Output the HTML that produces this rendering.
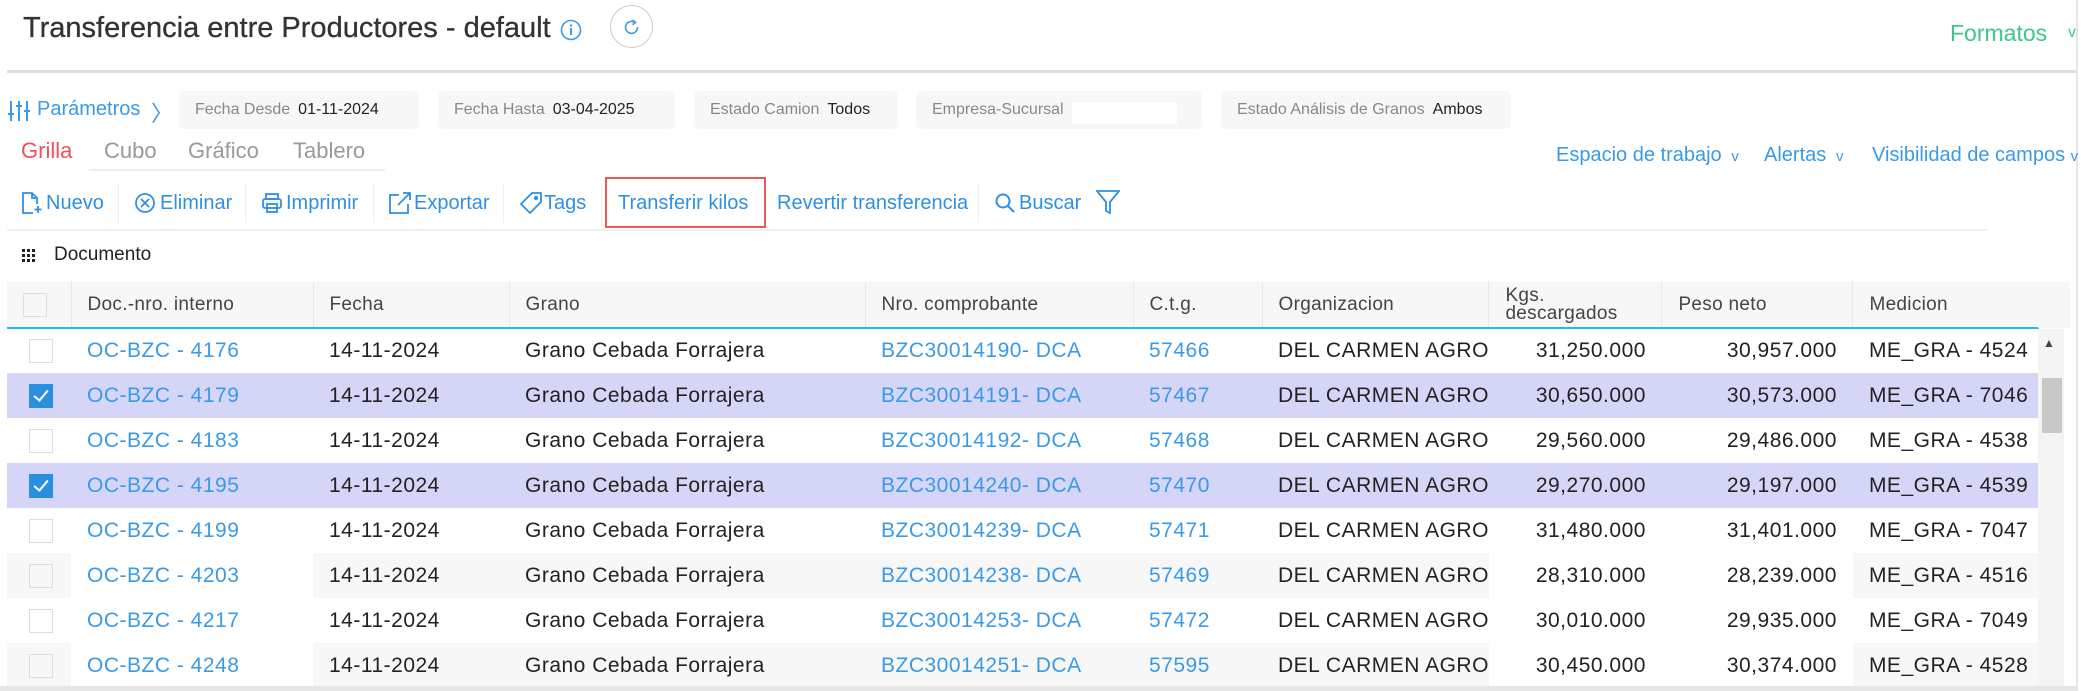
<!DOCTYPE html>
<html><head><meta charset="utf-8"><style>
*{margin:0;padding:0;box-sizing:border-box}
body{width:2081px;height:691px;overflow:hidden;background:#fff;font-family:"Liberation Sans",sans-serif;position:relative;color:#333}
.a{position:absolute;white-space:nowrap}
.blue{color:#3a9ae6}
.pbox{position:absolute;top:91px;height:38px;background:#f7f7f7;border-radius:6px;font-size:16px;line-height:38px;padding-left:16px}
.pbox .l{color:#888;margin-right:8px}
.pbox .v{color:#222}
.tb{position:absolute;top:191px;font-size:20px;color:#2f8fe3;line-height:24px}
.div{position:absolute;top:183px;width:1px;height:40px;background:#eee}
table{position:absolute;left:7px;top:282px;border-collapse:collapse;table-layout:fixed;font-size:21px;letter-spacing:0.5px}
td,th{overflow:hidden;white-space:nowrap;padding:0}
th{height:46px;background:#f7f7f7;font-weight:normal;color:#444;font-size:19px;letter-spacing:0.3px;text-align:left;border-bottom:2px solid #1ebcf2;border-right:1px solid #e8e8e8;padding-left:16px}
td{height:45px;padding-left:16px;color:#222}
td.r{text-align:right;padding-right:16px;padding-left:0}
td.l{color:#3a9ae6}
tr.s td{background:#d5d5f7}
.g{background:#f7f7f7}
.cb{display:inline-block;width:24px;height:24px;border:1px solid #ddd;background:#fff;vertical-align:middle}
.cb.c{background:#2b8fe0;border-color:#2b8fe0;position:relative}
.cb.c:after{content:"";position:absolute;left:7px;top:2px;width:6px;height:12px;border:solid #fff;border-width:0 2.5px 2.5px 0;transform:rotate(40deg)}
td.k{padding-left:22px}
</style></head><body>
<div class="a" style="left:23px;top:12px;font-size:29px;color:#333;-webkit-text-stroke:0.3px #333">Transferencia entre Productores - default</div>
<svg class="a" style="left:560px;top:19px" width="22" height="22" viewBox="0 0 22 22"><circle cx="11" cy="11" r="9.5" fill="none" stroke="#3a9ae6" stroke-width="1.6"/><circle cx="11" cy="6.5" r="1.2" fill="#3a9ae6"/><rect x="10" y="9" width="2" height="7" fill="#3a9ae6"/></svg>
<div class="a" style="left:610px;top:5px;width:43px;height:43px;border:1.5px solid #ccc;border-radius:50%"></div>
<svg class="a" style="left:622px;top:17px" width="20" height="20" viewBox="0 0 20 20"><path d="M13 5.5A6 6 0 1 0 15.5 10" fill="none" stroke="#3a9ae6" stroke-width="1.6"/><path d="M10.5 3l3 2.5-3 2.2" fill="none" stroke="#3a9ae6" stroke-width="1.6"/></svg>
<div class="a" style="left:1950px;top:20px;font-size:23px;color:#3cc68a">Formatos</div>
<div class="a" style="left:2068px;top:24px;font-size:16px;color:#3cc68a">v</div>
<div class="a" style="left:7px;top:70px;width:2070px;height:3px;background:#ddd"></div>
<div class="a" style="left:2076px;top:0;width:2px;height:691px;background:#e5e5e5"></div>

<svg class="a" style="left:7px;top:99px" width="24" height="24" viewBox="0 0 24 24" stroke="#3a9ae6" stroke-width="2" fill="none"><path d="M4 2v20M12 2v20M20 2v20"/><path d="M1 15h6M9 7h6M17 12h6"/></svg>
<div class="a blue" style="left:37px;top:98px;font-size:20px">Parámetros</div>
<div class="a blue" style="left:151px;top:96px;font-size:22px">〉</div>
<div class="pbox" style="left:179px;width:240px"><span class="l">Fecha Desde</span><span class="v">01-11-2024</span></div>
<div class="pbox" style="left:438px;width:237px"><span class="l">Fecha Hasta</span><span class="v">03-04-2025</span></div>
<div class="pbox" style="left:694px;width:204px"><span class="l">Estado Camion</span><span class="v">Todos</span></div>
<div class="pbox" style="left:916px;width:286px"><span class="l">Empresa-Sucursal</span></div>
<div class="a" style="left:1072px;top:102px;width:105px;height:22px;background:#fff"></div>
<div class="pbox" style="left:1221px;width:290px"><span class="l">Estado Análisis de Granos</span><span class="v">Ambos</span></div>

<div class="a" style="left:21px;top:138px;font-size:22px;color:#f0505a">Grilla</div>
<div class="a" style="left:104px;top:138px;font-size:22px;color:#999">Cubo</div>
<div class="a" style="left:188px;top:138px;font-size:22px;color:#999">Gráfico</div>
<div class="a" style="left:293px;top:138px;font-size:22px;color:#999">Tablero</div>
<div class="a" style="left:89px;top:169px;width:296px;height:2px;background:#eee"></div>
<div class="a blue" style="left:1556px;top:144px;font-size:20px">Espacio de trabajo <span style="font-size:15px">&nbsp;v</span></div>
<div class="a blue" style="left:1764px;top:144px;font-size:20px">Alertas <span style="font-size:15px">&nbsp;v</span></div>
<div class="a blue" style="left:1872px;top:144px;font-size:20px">Visibilidad de campos <span style="font-size:15px">v</span></div>

<svg class="a" style="left:21px;top:191px" width="22" height="24" viewBox="0 0 22 24" fill="none" stroke="#2f8fe3" stroke-width="1.8"><path d="M12 22H2V2h9l5 5v6"/><path d="M11 2v5h5"/><path d="M17 15v7M13.5 18.5h7"/></svg>
<div class="tb" style="left:46px">Nuevo</div>
<div class="div" style="left:118px"></div>
<svg class="a" style="left:134px;top:192px" width="22" height="22" viewBox="0 0 22 22" fill="none" stroke="#2f8fe3" stroke-width="1.8"><circle cx="11" cy="11" r="9"/><path d="M7 7l8 8M15 7l-8 8"/></svg>
<div class="tb" style="left:160px">Eliminar</div>
<div class="div" style="left:245px"></div>
<svg class="a" style="left:261px;top:192px" width="22" height="22" viewBox="0 0 22 22" fill="none" stroke="#2f8fe3" stroke-width="1.8"><rect x="5" y="2" width="12" height="5"/><rect x="2" y="7" width="18" height="9" rx="2"/><rect x="6" y="12" width="10" height="8"/></svg>
<div class="tb" style="left:286px">Imprimir</div>
<div class="div" style="left:373px"></div>
<svg class="a" style="left:388px;top:191px" width="24" height="24" viewBox="0 0 24 24" fill="none" stroke="#2f8fe3" stroke-width="1.8"><path d="M11 4H2v18h18v-9"/><path d="M10 14L22 2M15 2h7v7"/></svg>
<div class="tb" style="left:414px">Exportar</div>
<div class="div" style="left:503px"></div>
<svg class="a" style="left:519px;top:191px" width="24" height="24" viewBox="0 0 24 24" fill="none" stroke="#2f8fe3" stroke-width="1.8"><path d="M13 2h9v9L11 22 2 13z"/><circle cx="17" cy="7" r="1.3"/></svg>
<div class="tb" style="left:544px">Tags</div>
<div class="div" style="left:601px"></div>
<div class="a" style="left:605px;top:177px;width:161px;height:51px;border:2px solid #e85a5a"></div>
<div class="tb" style="left:618px">Transferir kilos</div>
<div class="tb" style="left:777px">Revertir transferencia</div>
<div class="div" style="left:978px"></div>
<svg class="a" style="left:994px;top:192px" width="22" height="22" viewBox="0 0 22 22" fill="none" stroke="#2f8fe3" stroke-width="2"><circle cx="9" cy="9" r="6.5"/><path d="M14 14l6 6"/></svg>
<div class="tb" style="left:1019px">Buscar</div>
<svg class="a" style="left:1096px;top:189px" width="24" height="26" viewBox="0 0 24 26" fill="none" stroke="#2f8fe3" stroke-width="1.8"><path d="M1 2h22l-9 11v11l-4-2v-9z"/></svg>
<div class="a" style="left:7px;top:229px;width:1981px;height:2px;background:#f0f0f0"></div>

<svg class="a" style="left:22px;top:249px" width="13" height="13" viewBox="0 0 13 13" fill="#222"><rect x="0" y="0" width="3" height="3"/><rect x="5" y="0" width="3" height="3"/><rect x="10" y="0" width="3" height="3"/><rect x="0" y="5" width="3" height="3"/><rect x="5" y="5" width="3" height="3"/><rect x="10" y="5" width="3" height="3"/><rect x="0" y="10" width="3" height="3"/><rect x="5" y="10" width="3" height="3"/><rect x="10" y="10" width="3" height="3"/></svg>
<div class="a" style="left:54px;top:244px;font-size:19px;color:#222">Documento</div>

<table>
<colgroup><col style="width:64px"><col style="width:242px"><col style="width:196px"><col style="width:356px"><col style="width:268px"><col style="width:129px"><col style="width:226px"><col style="width:173px"><col style="width:191px"><col style="width:186px"></colgroup>
<tr><th style="padding-left:16px"><span class="cb" style="background:#f7f7f7"></span></th><th>Doc.-nro. interno</th><th>Fecha</th><th>Grano</th><th>Nro. comprobante</th><th>C.t.g.</th><th>Organizacion</th><th style="line-height:18px">Kgs.<br>descargados</th><th>Peso neto</th><th>Medicion</th></tr>
<tr><td class="k"><span class="cb"></span></td><td class="l">OC-BZC - 4176</td><td>14-11-2024</td><td>Grano Cebada Forrajera</td><td class="l">BZC30014190- DCA</td><td class="l">57466</td><td>DEL CARMEN AGRO</td><td class="r">31,250.000</td><td class="r">30,957.000</td><td>ME_GRA - 4524</td></tr>
<tr class="s"><td class="k"><span class="cb c"></span></td><td class="l">OC-BZC - 4179</td><td>14-11-2024</td><td>Grano Cebada Forrajera</td><td class="l">BZC30014191- DCA</td><td class="l">57467</td><td>DEL CARMEN AGRO</td><td class="r">30,650.000</td><td class="r">30,573.000</td><td>ME_GRA - 7046</td></tr>
<tr><td class="k"><span class="cb"></span></td><td class="l">OC-BZC - 4183</td><td>14-11-2024</td><td>Grano Cebada Forrajera</td><td class="l">BZC30014192- DCA</td><td class="l">57468</td><td>DEL CARMEN AGRO</td><td class="r">29,560.000</td><td class="r">29,486.000</td><td>ME_GRA - 4538</td></tr>
<tr class="s"><td class="k"><span class="cb c"></span></td><td class="l">OC-BZC - 4195</td><td>14-11-2024</td><td>Grano Cebada Forrajera</td><td class="l">BZC30014240- DCA</td><td class="l">57470</td><td>DEL CARMEN AGRO</td><td class="r">29,270.000</td><td class="r">29,197.000</td><td>ME_GRA - 4539</td></tr>
<tr><td class="k"><span class="cb"></span></td><td class="l">OC-BZC - 4199</td><td>14-11-2024</td><td>Grano Cebada Forrajera</td><td class="l">BZC30014239- DCA</td><td class="l">57471</td><td>DEL CARMEN AGRO</td><td class="r">31,480.000</td><td class="r">31,401.000</td><td>ME_GRA - 7047</td></tr>
<tr><td class="k g"><span class="cb" style="background:#f7f7f7"></span></td><td class="l">OC-BZC - 4203</td><td class="g">14-11-2024</td><td class="g">Grano Cebada Forrajera</td><td class="l g">BZC30014238- DCA</td><td class="l g">57469</td><td class="g">DEL CARMEN AGRO</td><td class="r">28,310.000</td><td class="r">28,239.000</td><td class="g">ME_GRA - 4516</td></tr>
<tr><td class="k"><span class="cb"></span></td><td class="l">OC-BZC - 4217</td><td>14-11-2024</td><td>Grano Cebada Forrajera</td><td class="l">BZC30014253- DCA</td><td class="l">57472</td><td>DEL CARMEN AGRO</td><td class="r">30,010.000</td><td class="r">29,935.000</td><td>ME_GRA - 7049</td></tr>
<tr><td class="k g"><span class="cb" style="background:#f7f7f7"></span></td><td class="l">OC-BZC - 4248</td><td class="g">14-11-2024</td><td class="g">Grano Cebada Forrajera</td><td class="l g">BZC30014251- DCA</td><td class="l g">57595</td><td class="g">DEL CARMEN AGRO</td><td class="r">30,450.000</td><td class="r">30,374.000</td><td class="g">ME_GRA - 4528</td></tr>
</table>
<div class="a" style="left:2038px;top:282px;width:32px;height:46px;background:#f7f7f7"></div>
<div class="a" style="left:2038px;top:329px;width:26px;height:362px;background:#f4f4f4"></div>
<div class="a" style="left:2043px;top:336px;font-size:12px;color:#444">▲</div>
<div class="a" style="left:2042px;top:378px;width:20px;height:55px;background:#c8c8c8"></div>
<div class="a" style="left:0;top:686px;width:2076px;height:5px;background:#e6e6e6"></div>
</body></html>
